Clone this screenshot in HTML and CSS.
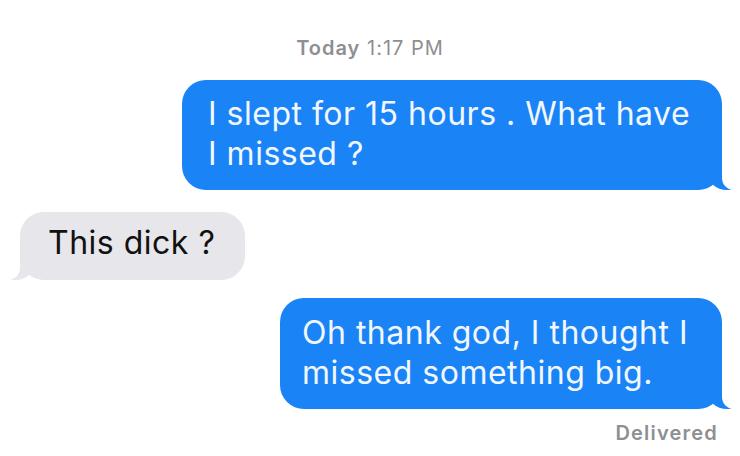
FILE: index.html
```html
<!DOCTYPE html>
<html lang="en">
<head>
  <meta charset="UTF-8">
  <meta name="viewport" content="width=device-width, initial-scale=1.0">
  <title>Messages</title>
  <link rel="stylesheet" href="styles.css">
</head>
<body>
  <div class="thread">
    <p class="stamp"><b>Today</b> 1:17 PM</p>

    <p class="bubble sent first">I slept for 15 hours . What have I missed ?</p>
    <p class="bubble received">This dick ?</p>
    <p class="bubble sent last">Oh thank god, I thought I missed something big.</p>

    <p class="status">Delivered</p>
  </div>
</body>
</html>
```

FILE: styles.css
```css
body {
  margin: 0;
  background: #fff;
  font-family: Inter, "Liberation Sans", Arial, sans-serif;
}
.thread {
  display: flex;
  flex-direction: column;
  padding: 36px 18px 0 18px;
}
.stamp {
  align-self: center;
  margin: 0;
  font-size: 20px;
  line-height: 24px;
  color: #8e8e93;
  letter-spacing: 1px;
}
.stamp b {
  font-weight: 600;
}
.bubble {
  position: relative;
  box-sizing: border-box;
  margin: 0;
  font-size: 32px;
  line-height: 40px;
  letter-spacing: 0.5px;
  border-radius: 24px;
}
.sent {
  align-self: flex-end;
  background-color: #1a84f6;
  color: #f2f7ff;
}
.received {
  align-self: flex-start;
  background-color: #e6e6eb;
  color: #111;
  margin: 22px 0 0 2px;
  padding: 11px 30px 17px 28px;
}
.first {
  width: 540px;
  margin-top: 20px;
  padding: 14px 18px 16px 26px;
}
.last {
  width: 442px;
  margin-top: 18px;
  padding: 15px 20px 16px 22px;
}

/* tails */
.bubble::before,
.bubble::after {
  content: "";
  position: absolute;
  bottom: 0;
  height: 24px;
}
.sent::before {
  right: -9px;
  border-right: 24px solid #1a84f6;
  border-bottom-left-radius: 20px 18px;
}
.sent::after {
  right: -16px;
  width: 16px;
  background: #fff;
  border-bottom-left-radius: 12px;
}
.received::before {
  left: -9px;
  border-left: 24px solid #e6e6eb;
  border-bottom-right-radius: 20px 18px;
}
.received::after {
  left: -16px;
  width: 16px;
  background: #fff;
  border-bottom-right-radius: 12px;
}

.status {
  align-self: flex-end;
  margin: 12px 4px 0 0;
  font-size: 20px;
  line-height: 24px;
  font-weight: 600;
  color: #8e8e93;
  letter-spacing: 1.2px;
}
```
